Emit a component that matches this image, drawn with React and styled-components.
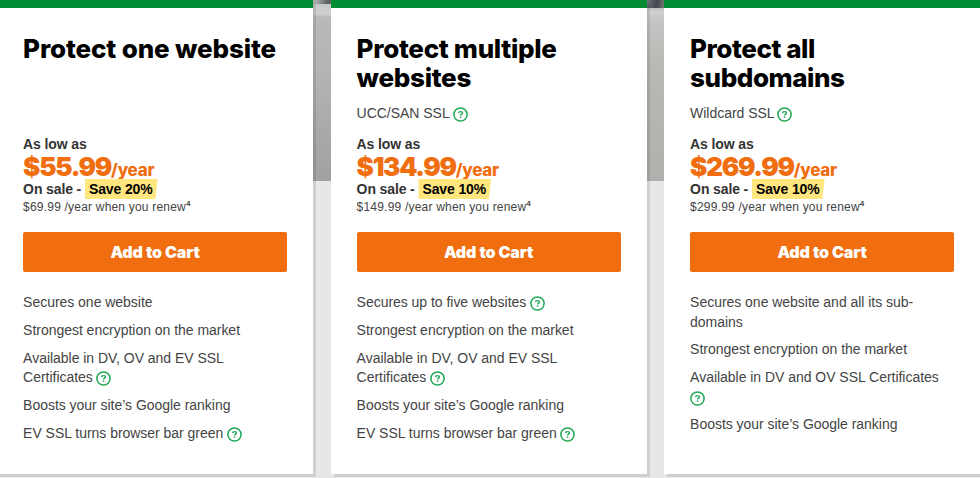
import React from 'react';
import styled, {createGlobalStyle} from 'styled-components';

const COLORS = {
  green: '#008a32',
  help: '#1fa855',
  orange: '#f06e0f',
  highlight: '#ffe67f',
  text: '#444',
  strong: '#333',
  page: '#e7e7e7',
};

const FONTS = {
  body: '"Liberation Sans", Arial, sans-serif',
  display: 'Inter, "Liberation Sans", sans-serif',
};

const PLANS = [
  {
    title: 'Protect one website',
    tracking: -0.13,
    price: '$55.99',
    save: 'Save 20%',
    renew: '$69.99',
    features: [
      {text: 'Secures one website'},
      {text: 'Strongest encryption on the market'},
      {text: 'Available in DV, OV and EV SSL Certificates', help: true},
      {text: 'Boosts your site’s Google ranking'},
      {text: 'EV SSL turns browser bar green', help: true},
    ],
  },
  {
    title: 'Protect multiple websites',
    tracking: -0.3,
    subtitle: 'UCC/SAN SSL',
    price: '$134.99',
    save: 'Save 10%',
    renew: '$149.99',
    features: [
      {text: 'Secures up to five websites', help: true},
      {text: 'Strongest encryption on the market'},
      {text: 'Available in DV, OV and EV SSL Certificates', help: true},
      {text: 'Boosts your site’s Google ranking'},
      {text: 'EV SSL turns browser bar green', help: true},
    ],
  },
  {
    title: 'Protect all subdomains',
    tracking: -0.45,
    subtitle: 'Wildcard SSL',
    price: '$269.99',
    save: 'Save 10%',
    renew: '$299.99',
    features: [
      {text: 'Secures one website and all its sub-domains'},
      {text: 'Strongest encryption on the market'},
      {text: 'Available in DV and OV SSL Certificates', help: true},
      {text: 'Boosts your site’s Google ranking'},
    ],
  },
];

const Help = () => (
  <HelpIcon viewBox='0 0 15 15' fill='none' stroke={COLORS.help}>
    <circle cx='7.5' cy='7.5' r='6.6' strokeWidth='1.5'/>
    <path d='M5.5 6.1C5.6 5 6.4 4.6 7.5 4.6s2 .4 2 1.4c0 1.2-1.9 1.1-1.9 2.4' strokeWidth='1.4'/>
    <path d='M7.6 9.4v1.4' strokeWidth='1.5'/>
  </HelpIcon>
);

const PlanCard = ({plan}) => (
  <Card>
    <Heading>
      <Title $tracking={plan.tracking}>{plan.title}</Title>
      {plan.subtitle && (
        <Subtitle>
          {plan.subtitle} <Help/>
        </Subtitle>
      )}
    </Heading>
    <Label>As low as</Label>
    <Price>
      {plan.price}<Period>/year</Period>
    </Price>
    <Label>
      On sale - <Save>{plan.save}</Save>
    </Label>
    <Renew>
      {plan.renew} /year when you renew<Note>4</Note>
    </Renew>
    <CartButton>Add to Cart</CartButton>
    <Features>
      {plan.features.map(({text, help}) => (
        <Feature key={text}>
          {text}{help && <> <Help/></>}
        </Feature>
      ))}
    </Features>
  </Card>
);

const App = () => (
  <Page>
    <GlobalStyle/>
    <Plans>
      {PLANS.map((plan) => <PlanCard key={plan.title} plan={plan}/>)}
    </Plans>
  </Page>
);

const GlobalStyle = createGlobalStyle`
    *, *::before, *::after {
        box-sizing: border-box;
    }

    body {
        margin: 0;
        overflow: hidden;
    }
`;

const Page = styled.main`
    width: 980px;
    height: 478px;
    overflow: hidden;
    color: ${COLORS.text};
    font-family: ${FONTS.body};
    font-size: 14px;
    letter-spacing: -0.03px;
    line-height: 19.5px;
    background:
        linear-gradient(100deg, #aaa 20%, #5d6064 80%) 313px 0 / 18px 4px no-repeat,
        linear-gradient(100deg, #77797c, #3f454d 60%, #777) 646px 0 / 18px 8px no-repeat,
        linear-gradient(#c4c6c7 0, #cfcfcf 14px, #b9b9b9 17px, #b4b4b2 70px, #a1a1a0) 0 0 / 500px 181px no-repeat,
        linear-gradient(#999 0, #d0d0d0 12px, #c4c4c4 22px, #b9bab4 60px, #b0b0ae) 500px 0 / 480px 181px no-repeat,
        ${COLORS.page};
`;

const Plans = styled.div`
    display: flex;
    gap: 17.5px;
    width: 983px;
    height: 473.5px;
    margin-left: -2.9px;
`;

const Card = styled.section`
    flex: 0 0 316px;
    padding: 26px 26px 0;
    background: #fff;
    border-top: 8px solid ${COLORS.green};
    box-shadow: 3px 3px 0 rgba(0, 0, 0, 0.1);
`;

const Heading = styled.header`
    height: 100px;
`;

const Title = styled.h2`
    margin: 0 0 12px;
    color: #000;
    font-family: ${FONTS.display};
    font-size: 26px;
    font-weight: 800;
    letter-spacing: ${({$tracking}) => $tracking}px;
    line-height: 29px;
`;

const Subtitle = styled.p`
    margin: 0;
`;

const Label = styled.p`
    margin: 0;
    color: ${COLORS.strong};
    font-weight: bold;
    letter-spacing: -0.12px;
    line-height: 20px;
`;

const Price = styled.p`
    margin: 0;
    color: ${COLORS.orange};
    font-family: ${FONTS.display};
    font-size: 26px;
    font-weight: 900;
    letter-spacing: -1.3px;
    line-height: 25px;
`;

const Period = styled.span`
    font-size: 17px;
    font-weight: 800;
    letter-spacing: -0.25px;
    line-height: 0;
`;

const Save = styled.span`
    display: inline-block;
    padding: 0 5px 0 4px;
    color: #000;
    background: ${COLORS.highlight};
    clip-path: polygon(0 0, 100% 0, 97% 100%, 0 100%);
`;

const Renew = styled.p`
    margin: 0 0 16px;
    font-size: 12px;
    letter-spacing: 0.2px;
    line-height: 17px;
`;

const Note = styled.sup`
    font-size: 8px;
    font-weight: bold;
    line-height: 0;
`;

const CartButton = styled.button`
    display: block;
    width: 264px;
    height: 40px;
    padding: 0;
    color: #fff;
    font-family: ${FONTS.display};
    font-size: 16px;
    font-weight: 900;
    letter-spacing: -0.1px;
    background: ${COLORS.orange};
    border: 0;
    border-radius: 2px;
`;

const Features = styled.ul`
    margin: 21px 0 0;
    padding: 0;
    list-style: none;
`;

const Feature = styled.li`
    margin-bottom: 8.3px;
`;

const HelpIcon = styled.svg`
    width: 15px;
    height: 15px;
    margin-left: -0.5px;
    vertical-align: -4px;
`;

export default App;
